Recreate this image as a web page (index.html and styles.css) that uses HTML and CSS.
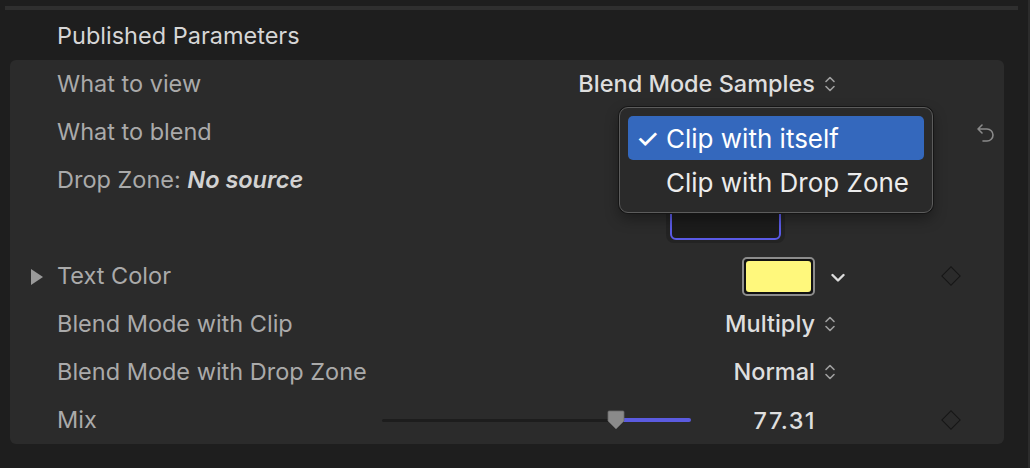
FILE: index.html
```html
<!DOCTYPE html>
<html>
<head>
<meta charset="utf-8">
<link rel="stylesheet" href="styles.css">
</head>
<body>
<div class="topbar"></div>
<div class="title">Published Parameters</div>
<div class="panel">
  <div class="row">
    <div class="main"><span class="label">What to view</span><span class="value">Blend Mode Samples</span></div>
    <div class="icon-cell"><svg class="stepper" viewBox="0 0 12 20" width="12" height="20"><path d="M2 7.5 L6 3.5 L10 7.5 M2 12.5 L6 16.5 L10 12.5" fill="none" stroke="#a0a0a0" stroke-width="1.6" stroke-linecap="round" stroke-linejoin="round"/></svg></div>
    <div></div><div></div><div></div>
  </div>
  <div class="row">
    <div class="main"><span class="label">What to blend</span></div>
    <div></div><div></div><div></div>
    <div class="undo-cell"><svg viewBox="0 0 20 22" width="20" height="22"><path d="M6 3 L2 7 L6 11 M2 7 H11 A6 6 0 0 1 11 19 H7" fill="none" stroke="#8a8a8a" stroke-width="1.6" stroke-linecap="round" stroke-linejoin="round"/></svg></div>
  </div>
  <div class="row tall">
    <div class="main top"><span class="label">Drop Zone: <b>No source</b></span>
      <div class="well"><div class="well-inner"><span class="well-mark"></span></div></div>
    </div>
    <div></div><div></div><div></div><div></div>
  </div>
  <div class="row">
    <div class="tri-cell"><svg viewBox="0 0 14 18" width="14" height="18"><path d="M1 1 L13 9 L1 17 Z" fill="#9a9a9a"/></svg></div>
    <div class="main"><span class="label">Text Color</span><span class="swatch"><span class="swatch-fill"></span></span></div>
    <div class="icon-cell"><svg class="chev" viewBox="0 0 14 10" width="14" height="10"><path d="M1.5 2 L7 7.5 L12.5 2" fill="none" stroke="#dcdcdc" stroke-width="2.4" stroke-linecap="round" stroke-linejoin="round"/></svg></div>
    <div></div>
    <div class="diamond-cell"><span class="diamond"></span></div>
    <div></div>
  </div>
  <div class="row">
    <div class="main"><span class="label">Blend Mode with Clip</span><span class="value">Multiply</span></div>
    <div class="icon-cell"><svg class="stepper" viewBox="0 0 12 20" width="12" height="20"><path d="M2 7.5 L6 3.5 L10 7.5 M2 12.5 L6 16.5 L10 12.5" fill="none" stroke="#a0a0a0" stroke-width="1.6" stroke-linecap="round" stroke-linejoin="round"/></svg></div>
    <div></div><div></div><div></div>
  </div>
  <div class="row">
    <div class="main"><span class="label">Blend Mode with Drop Zone</span><span class="value">Normal</span></div>
    <div class="icon-cell"><svg class="stepper" viewBox="0 0 12 20" width="12" height="20"><path d="M2 7.5 L6 3.5 L10 7.5 M2 12.5 L6 16.5 L10 12.5" fill="none" stroke="#a0a0a0" stroke-width="1.6" stroke-linecap="round" stroke-linejoin="round"/></svg></div>
    <div></div><div></div><div></div>
  </div>
  <div class="row">
    <div class="main"><span class="label">Mix</span>
      <div class="slider">
        <div class="track-left"></div>
        <svg class="thumb" viewBox="0 0 18 20" width="18" height="20"><path d="M2 1 H16 A1 1 0 0 1 17 2 V11 L9 19 L1 11 V2 A1 1 0 0 1 2 1 Z" fill="#8a8a8a" stroke="#6a6a6a" stroke-width="0.8"/></svg>
        <div class="track-right"></div>
      </div>
      <span class="num">77.31</span>
    </div>
    <div></div><div></div>
    <div class="diamond-cell"><span class="diamond"></span></div>
    <div></div>
  </div>

  <div class="menu">
    <div class="item selected"><span class="check">✓</span>Clip with itself</div>
    <div class="item"><span class="check"></span>Clip with Drop Zone</div>
  </div>
</div>
</body>
</html>
```
FILE: styles.css
```css
* { box-sizing: border-box; }
html, body { margin: 0; padding: 0; }
body {
  width: 1030px;
  height: 468px;
  background: #1e1e1e;
  font-family: Inter, "Noto Sans", sans-serif;
  overflow: hidden;
  border-right: 2px solid #2c2c2c;
}
.topbar {
  height: 4px;
  margin: 6px 10px 0 5px;
  background: #2f2f2f;
}
.title {
  height: 50px;
  padding-left: 57px;
  padding-top: 12px;
  font-size: 23.5px;
  color: #d6d6d6;
  line-height: 28px;
}
.panel {
  position: relative;
  margin: 0 24px 0 10px;
  height: 384px;
  background: #2b2b2b;
  border-radius: 6px;
}
.row {
  display: grid;
  grid-template-columns: 20px 27px 1fr 35px 80px 40px 28px 6px;
  height: 48px;
  align-items: center;
}
.row > .main { grid-column: 3; }
.row.tall { height: 96px; align-items: start; }
.tri-cell { grid-column: 2; display: flex; align-items: center; padding-top: 1px; }
.main {
  display: flex;
  align-items: center;
  height: 100%;
}
.main.top { align-items: flex-start; position: relative; }
.label {
  flex: 1;
  font-size: 23.5px;
  color: #aaaaaa;
  line-height: 28px;
}
.main.top .label { padding-top: 10px; }
.label b { font-style: italic; font-weight: 600; color: #d2d2d2; }
.value {
  font-size: 23.5px;
  color: #dedede;
  font-weight: 500;
  line-height: 28px;
}
.icon-cell { display: flex; align-items: center; padding-left: 9px; }
.icon-cell svg { flex-shrink: 0; }
.icon-cell .chev { margin-left: 7px; margin-top: 4px; }
.diamond-cell { display: flex; justify-content: center; align-items: center; padding-left: 2px; }
.diamond {
  width: 14px; height: 14px;
  border: 1.6px solid #161616;
  transform: rotate(45deg);
}
.undo-cell { display: flex; justify-content: center; align-items: center; padding-top: 2px; padding-left: 3px; }
.well {
  margin-top: 9px;
  margin-right: 30px;
  width: 119px;
  height: 78px;
  background: #232323;
  border-radius: 8px;
  padding: 0 4px 3px 4px;
}
.well-inner {
  position: relative;
  height: 100%;
  background: #1c1c1c;
  border: 2px solid #5a5ae6;
  border-radius: 6px;
}
.well-mark {
  position: absolute;
  left: 50%;
  top: 41px;
  margin-left: -6px;
  border-left: 6px solid transparent;
  border-right: 6px solid transparent;
  border-top: 6px solid #666;
}
.swatch {
  width: 73px;
  height: 39px;
  border: 2px solid #8c8c8c;
  border-radius: 5px;
  background: #111;
  padding: 2px;
  margin-right: 0;
  margin-top: 1px;
}
.swatch-fill {
  display: block;
  height: 100%;
  background: #fff87c;
  border-radius: 3px;
}
.slider {
  width: 309px;
  display: flex;
  align-items: center;
  position: relative;
}
.track-left { width: 228px; height: 3px; background: #1d1d1d; border-radius: 2px; }
.thumb { margin: 0 -3px; position: relative; z-index: 1; }
.track-right { flex: 1; height: 4px; background: #5b5be0; border-radius: 2px; }
.num {
  width: 125px;
  text-align: right;
  font-size: 23.5px;
  color: #dedede;
  font-weight: 500;
  letter-spacing: 1.4px;
  margin-right: -1px;
}
.menu {
  position: absolute;
  left: 609px;
  top: 47px;
  width: 314px;
  height: 106px;
  background: #2a2a2a;
  border: 1.5px solid #5c5c5c;
  border-radius: 9px;
  padding: 8px;
  box-shadow: 0 0 0 1px #151515, 0 6px 14px rgba(0,0,0,0.35);
}
.item {
  height: 44px;
  display: flex;
  align-items: center;
  font-size: 26px;
  color: #ececec;
  border-radius: 5px;
  padding-left: 8px;
}
.item.selected { background: #3468bd; color: #ffffff; }
.check { width: 30px; font-size: 26px; font-weight: 500; }
```
